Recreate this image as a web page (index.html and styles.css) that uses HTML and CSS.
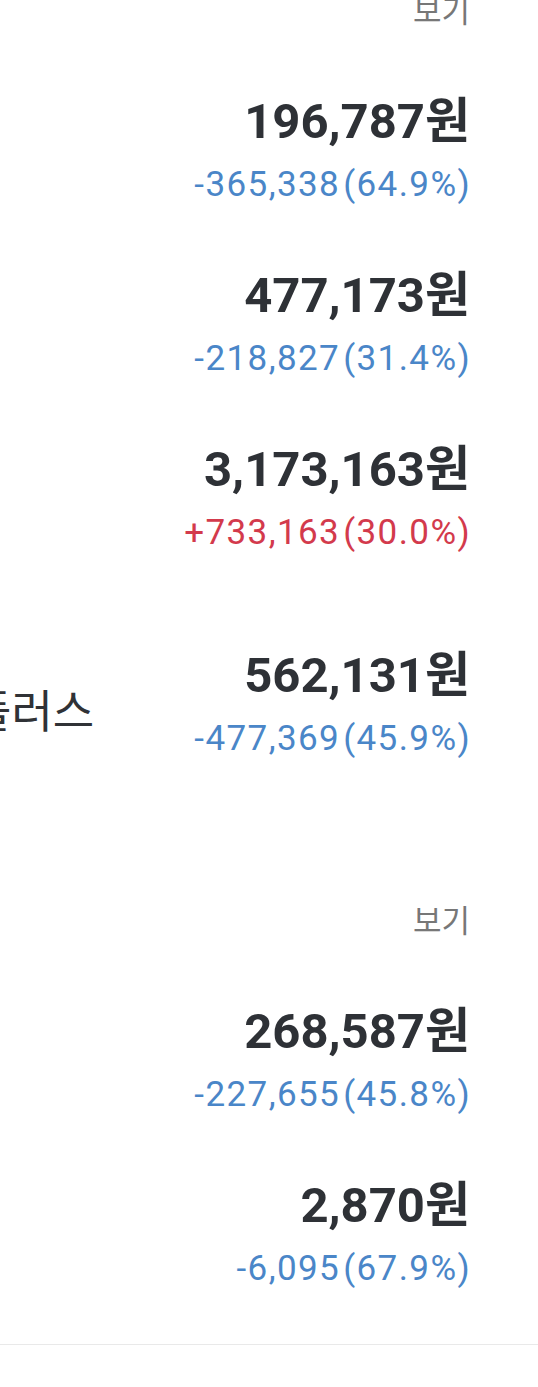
FILE: index.html
```html
<!DOCTYPE html>
<html lang="ko">
<head>
  <meta charset="UTF-8" />
  <meta name="viewport" content="width=device-width, initial-scale=1.0" />
  <title>보유 자산</title>
  <link rel="stylesheet" href="styles.css">
</head>
<body>
  <main class="portfolio">

    <section class="group">
      <div class="group-head">
        <a class="more" href="#">보기</a>
      </div>
      <ul class="holdings">
        <li class="holding">
          <div class="holding-value">
            <div class="amount">196,787원</div>
            <div class="change down">-365,338<span class="rate">(64.9%)</span></div>
          </div>
        </li>
        <li class="holding">
          <div class="holding-value">
            <div class="amount">477,173원</div>
            <div class="change down">-218,827<span class="rate">(31.4%)</span></div>
          </div>
        </li>
        <li class="holding">
          <div class="holding-value">
            <div class="amount">3,173,163원</div>
            <div class="change up">+733,163<span class="rate">(30.0%)</span></div>
          </div>
        </li>
        <li class="holding holding-tall">
          <div class="holding-name">플러스</div>
          <div class="holding-value">
            <div class="amount">562,131원</div>
            <div class="change down">-477,369<span class="rate">(45.9%)</span></div>
          </div>
        </li>
      </ul>
    </section>

    <section class="group group-last">
      <div class="group-head">
        <a class="more" href="#">보기</a>
      </div>
      <ul class="holdings">
        <li class="holding">
          <div class="holding-value">
            <div class="amount">268,587원</div>
            <div class="change down">-227,655<span class="rate">(45.8%)</span></div>
          </div>
        </li>
        <li class="holding">
          <div class="holding-value">
            <div class="amount">2,870원</div>
            <div class="change down">-6,095<span class="rate">(67.9%)</span></div>
          </div>
        </li>
      </ul>
    </section>

  </main>
</body>
</html>
```

FILE: styles.css
```css
html, body {
  margin: 0;
  padding: 0;
  background: #fff;
  overflow-x: hidden;
  font-family: Roboto, 'Noto Sans CJK KR', sans-serif;
  color: #2e3136;
}

/* list is scrolled a little, so the first header sits under the top edge */
.portfolio {
  margin-top: -13px;
}

.group {
  margin-bottom: 75px;
}

.group-last {
  margin-bottom: 0;
  padding-bottom: 24px;
  border-bottom: 1px solid #e9e9e9;
}

.group-head {
  display: flex;
  justify-content: flex-end;
  padding: 0 68px 31px 0;
}

.more {
  font-family: 'Noto Sans CJK KR', sans-serif;
  font-size: 31px;
  line-height: 44px;
  color: #777;
  text-decoration: none;
}

.holdings {
  list-style: none;
  margin: 0;
  padding: 0;
}

.holding {
  display: flex;
  justify-content: space-between;
  align-items: center;
  padding: 32px 68px 31px 0;
}

.holding-tall {
  padding-top: 64px;
  padding-bottom: 63px;
}

.holding-name {
  flex-shrink: 0;
  margin-left: -30px;
  margin-top: 10px;
  font-family: 'Noto Sans CJK KR', sans-serif;
  font-size: 45px;
  line-height: 60px;
  white-space: nowrap;
  color: #303236;
}

.holding-value {
  margin-left: auto;
  text-align: right;
}

.amount {
  font-size: 49px;
  line-height: 56px;
  font-weight: 700;
  white-space: nowrap;
}

.change {
  margin-top: 15px;
  margin-right: -1px;
  font-size: 35px;
  line-height: 40px;
  letter-spacing: 1.4px;
  white-space: nowrap;
}

.rate {
  margin-left: 3px;
}

.change.down {
  color: #4a86c8;
}

.change.up {
  color: #d33a4c;
}
```
